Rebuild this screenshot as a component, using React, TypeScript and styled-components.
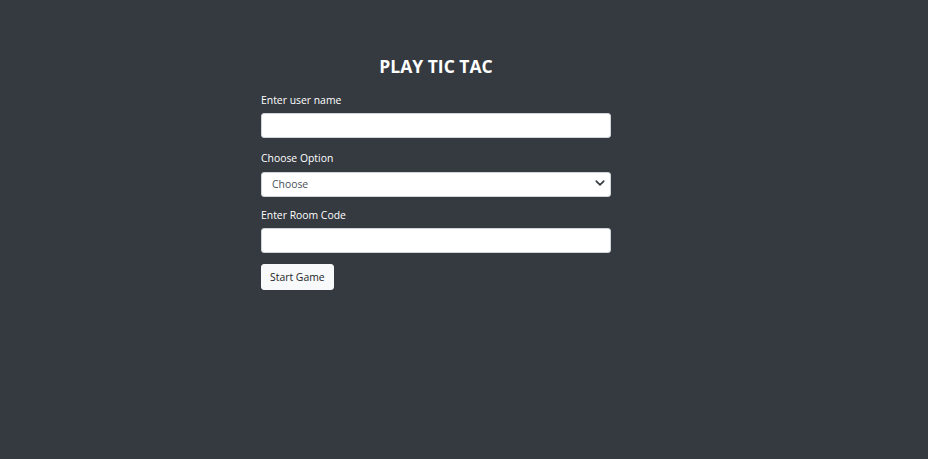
import React from "react";
import styled, { createGlobalStyle } from "styled-components";

const Global = createGlobalStyle`
  html, body { margin: 0; padding: 0; background: #343a40; }
  body { font-family: "Open Sans", "Noto Sans", sans-serif; }
  * { box-sizing: border-box; }
`;

const Page = styled.div`
  min-height: 459px;
  background: #343a40;
  display: flex;
  justify-content: center;
  padding: 54px 56px 0 0;
`;

const Form = styled.form`
  width: 350px;
  display: flex;
  flex-direction: column;
`;

const Title = styled.h1`
  margin: 0 0 13px;
  font-size: 17.5px;
  line-height: 24px;
  font-weight: 700;
  color: #ffffff;
  text-align: center;
`;

const Field = styled.div<{ $gap: number }>`
  display: flex;
  flex-direction: column;
  margin-bottom: ${(p) => p.$gap}px;
`;

const Label = styled.label`
  font-size: 10.4px;
  line-height: 18px;
  color: #ffffff;
  margin-bottom: 4px;
`;

const Input = styled.input`
  height: 25px;
  width: 100%;
  border: 1px solid #ced4da;
  border-radius: 3px;
  background: #ffffff;
  padding: 0 10px;
  font-family: inherit;
  font-size: 10.4px;
  outline: none;
`;

const SelectWrap = styled.div`
  position: relative;
  height: 25px;
`;

const Select = styled.select`
  appearance: none;
  height: 25px;
  width: 100%;
  border: 1px solid #ced4da;
  border-radius: 3px;
  background: #ffffff;
  padding: 0 24px 0 10px;
  font-family: inherit;
  font-size: 10.4px;
  color: #495057;
  outline: none;
`;

const Chevron = styled.svg`
  position: absolute;
  right: 6px;
  top: 8px;
  width: 10px;
  height: 8px;
  pointer-events: none;
`;

const Button = styled.button`
  align-self: flex-start;
  height: 26px;
  padding: 0 8px;
  border: 1px solid #f8f9fa;
  border-radius: 3px;
  background: #f8f9fa;
  color: #212529;
  font-family: inherit;
  font-size: 10.4px;
  cursor: pointer;
`;

export default function App() {
  return (
    <>
      <Global />
      <Page>
        <Form onSubmit={(e) => e.preventDefault()}>
          <Title>PLAY TIC TAC</Title>
          <Field $gap={11}>
            <Label>Enter user name</Label>
            <Input type="text" />
          </Field>
          <Field $gap={10}>
            <Label>Choose Option</Label>
            <SelectWrap>
              <Select defaultValue="">
                <option value="">Choose</option>
                <option value="create">Create Room</option>
                <option value="join">Join Room</option>
              </Select>
              <Chevron viewBox="0 0 16 12">
                <path d="M2 3l6 6 6-6" fill="none" stroke="#343a40" strokeWidth="2.6" strokeLinecap="round" strokeLinejoin="round" />
              </Chevron>
            </SelectWrap>
          </Field>
          <Field $gap={11}>
            <Label>Enter Room Code</Label>
            <Input type="text" />
          </Field>
          <Button type="submit">Start Game</Button>
        </Form>
      </Page>
    </>
  );
}
